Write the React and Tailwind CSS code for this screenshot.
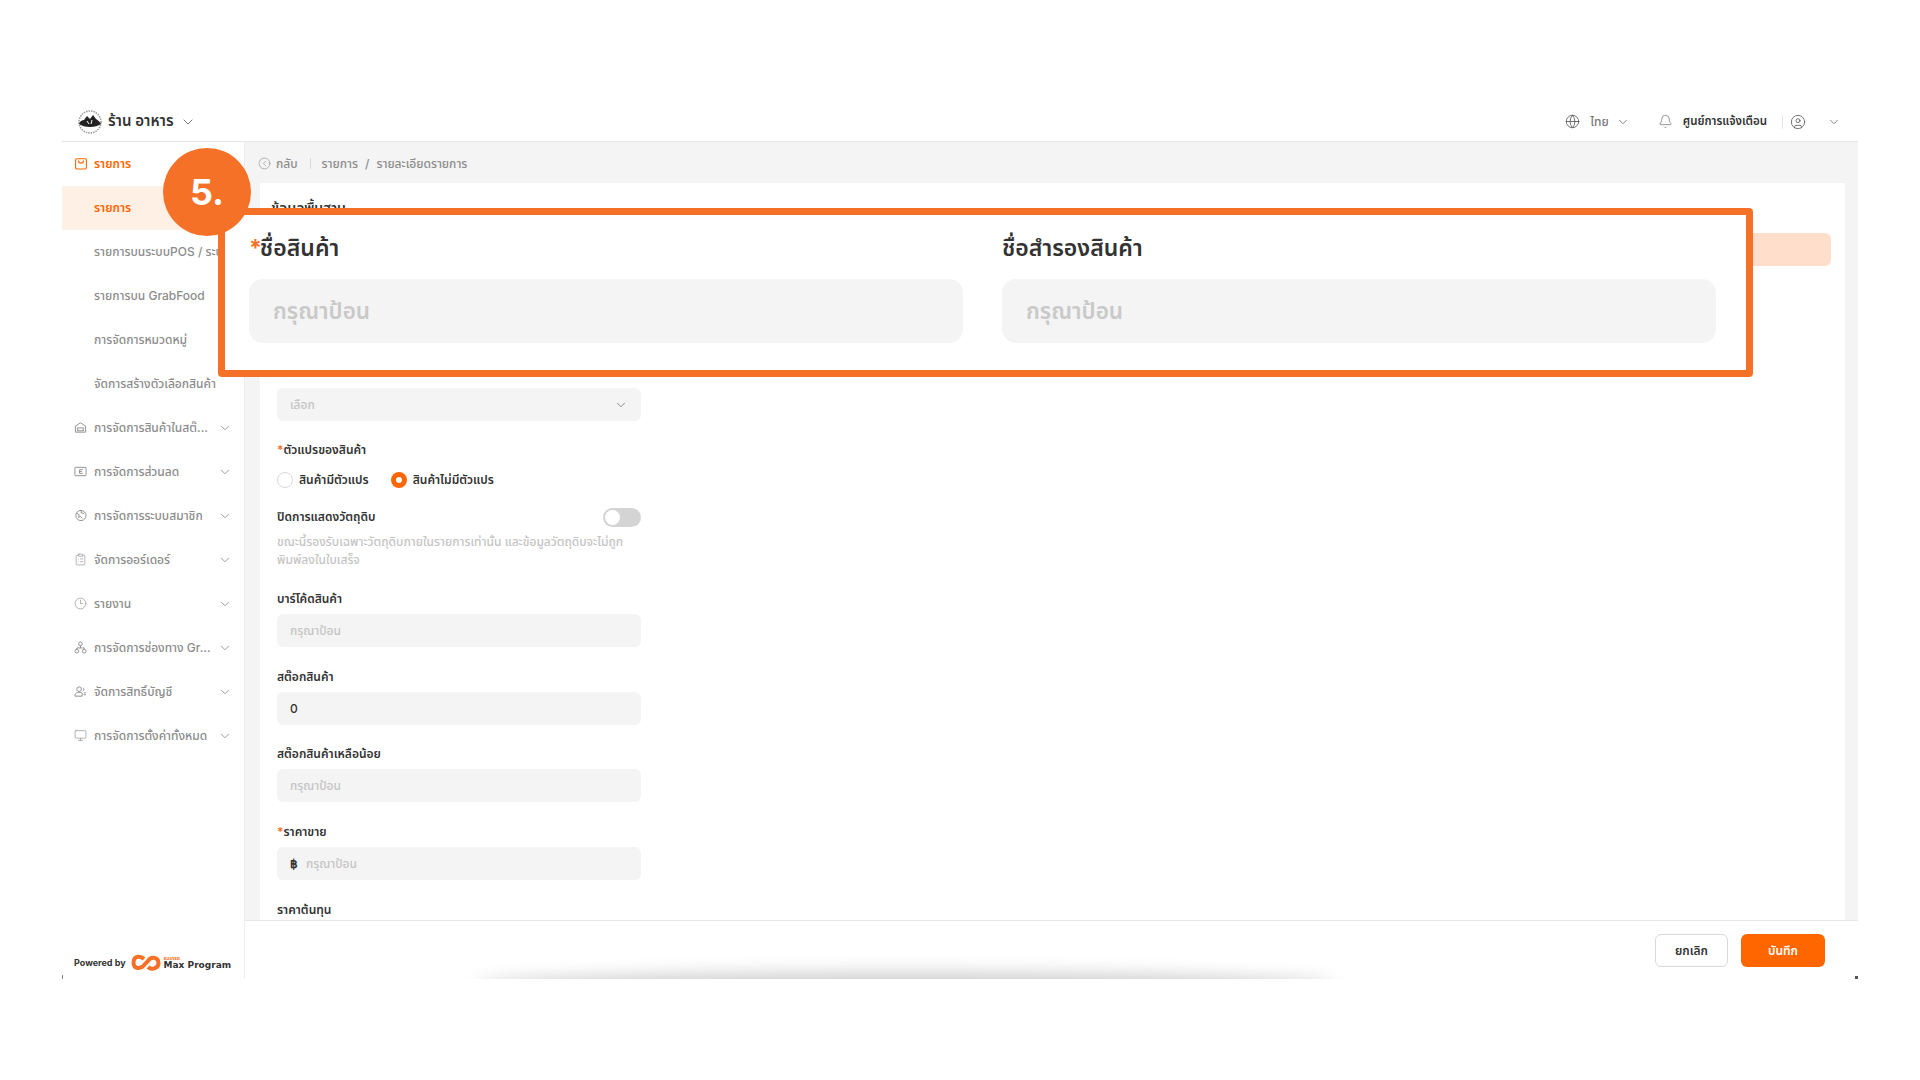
import { Bell, ChevronDown, CircleChevronLeft, CircleUser, ClipboardList, Clock3, Globe, Monitor } from "lucide-react";

const FONT = "font-['Inter','Noto_Sans','Noto_Sans_Thai',sans-serif]";

const subItems = [
  { label: "รายการ", active: true },
  { label: "รายการบนระบบPOS / ระบบ" },
  { label: "รายการบน GrabFood" },
  { label: "การจัดการหมวดหมู่" },
  { label: "จัดการสร้างตัวเลือกสินค้า" },
];

function StoreIcon(props) {
  return (
    <svg {...props} viewBox="0 0 14 14" fill="none" stroke="currentColor" strokeWidth="1">
      <path d="M1.500 5.500 L7 2 L12.500 5.500 V12 H1.500 Z" />
      <rect x="4" y="7.500" width="6" height="3" />
    </svg>
  );
}

function CouponIcon(props) {
  return (
    <svg {...props} viewBox="0 0 14 14" fill="none" stroke="currentColor" strokeWidth="1">
      <rect x="1" y="2.500" width="12" height="9" rx="0.5" />
      <path d="M9.500 5 H6 V9 H9.500 M6 7 H8.500" />
    </svg>
  );
}

function MemberIcon(props) {
  return (
    <svg {...props} viewBox="0 0 14 14" fill="none" stroke="currentColor" strokeWidth="1">
      <circle cx="7.500" cy="7" r="5.500" />
      <path d="M2.500 4.500 L5.500 6 L5 9 L7 8 L9 10 M8 1.500 L7.500 4 L11 5" />
    </svg>
  );
}

function ChannelIcon(props) {
  return (
    <svg {...props} viewBox="0 0 14 14" fill="none" stroke="currentColor" strokeWidth="1">
      <circle cx="7" cy="3" r="2" />
      <circle cx="3" cy="11" r="2" />
      <circle cx="11" cy="11" r="2" />
      <path d="M7 5 V7.500 M3 9 V7.500 H11 V9" />
    </svg>
  );
}

function AccountIcon(props) {
  return (
    <svg {...props} viewBox="0 0 14 14" fill="none" stroke="currentColor" strokeWidth="1">
      <circle cx="5.500" cy="4.500" r="2.500" />
      <path d="M1 12 C1 8.500 3 8 5.500 8 C7 8 8 8.200 8.800 9 V12 Z M9.500 3 C11 3.500 11 6 9.500 6.500 M10.500 8.500 H13 M10.500 10.500 H13" />
    </svg>
  );
}

const menuItems = [
  { label: "การจัดการสินค้าในสต๊...", icon: StoreIcon },
  { label: "การจัดการส่วนลด", icon: CouponIcon },
  { label: "การจัดการระบบสมาชิก", icon: MemberIcon },
  { label: "จัดการออร์เดอร์", icon: ClipboardList },
  { label: "รายงาน", icon: Clock3 },
  { label: "การจัดการช่องทาง Gr...", icon: ChannelIcon },
  { label: "จัดการสิทธิ์บัญชี", icon: AccountIcon },
  { label: "การจัดการตั้งค่าทั้งหมด", icon: Monitor },
];

function ShopLogo() {
  return (
    <svg width="24" height="24" viewBox="0 0 24 24">
      <circle cx="12" cy="12" r="11" fill="none" stroke="#999" strokeWidth="1.500" strokeDasharray="1.500 1" />
      <path d="M1 14 C2 11 4 10 6 10 L9 6 L12 9 L15 5 L18 9 C20 10 22 12 23 14 C18 18 6 18 1 14 Z" fill="#222" />
      <path d="M9 11 L11 14 M14 10 L13 14" stroke="#fff" strokeWidth="1" />
    </svg>
  );
}

function MenuBagIcon() {
  return (
    <svg width="12" height="12" viewBox="0 0 12 12" fill="none" stroke="#ff6600" strokeWidth="1.100">
      <rect x="0.600" y="0.800" width="10.800" height="10.200" rx="1.200" />
      <path d="M3.500 2.500 C3.500 6 8.500 6 8.500 2.500" />
    </svg>
  );
}

function MaxLogo() {
  return (
    <svg width="30" height="18" viewBox="0 0 30 18" fill="none" stroke="#f57127" strokeWidth="4">
      <path d="M13 5 C10 2 3 1 2.500 8.500 C2.500 15 10 16 14 10 L17 7 C20 2 27.500 3 27.500 9 C27.500 15 20 16 17 13" />
    </svg>
  );
}

function Sidebar() {
  return (
    <aside className="w-[183px] shrink-0 border-r border-[#eeeeee] bg-white flex flex-col">
      <div className="h-[44px] flex items-center pl-[13px] gap-[7px] text-[12px] font-semibold text-[#ff6600]">
        <MenuBagIcon />
        <span>รายการ</span>
      </div>
      {subItems.map((item) => (
        <div
          key={item.label}
          className={`h-[44px] flex items-center pl-[32px] text-[12px] whitespace-nowrap overflow-hidden ${
            item.active ? "bg-[#fff0e6] text-[#ff6600] font-semibold" : "text-[#8c8c8c] font-medium"
          }`}
        >
          {item.label}
        </div>
      ))}
      {menuItems.map((item) => (
        <div key={item.label} className="h-[44px] flex items-center pl-[12px] pr-[12px] text-[12px] font-medium text-[#8c8c8c]">
          <item.icon width={13} height={13} strokeWidth={1.2} className="-mt-[2px]" />
          <span className="ml-[7px] flex-1 whitespace-nowrap overflow-hidden">{item.label}</span>
          <ChevronDown size={14} strokeWidth={1.500} />
        </div>
      ))}
      <div className="mt-auto mb-[7px] pl-[12px] flex items-center gap-[5px]">
        <span className="text-[9px] font-bold text-[#333] whitespace-nowrap">Powered by</span>
        <MaxLogo />
        <div className="flex flex-col leading-none -ml-[2px]">
          <span className="text-[5px] font-bold text-[#f57127]">รมเกรด</span>
          <span className="text-[9px] font-bold text-[#333] whitespace-nowrap font-['DejaVu_Sans',sans-serif]">Max Program</span>
        </div>
      </div>
    </aside>
  );
}

function Label({ children, required }) {
  return (
    <div className="h-[16px] flex items-center text-[12px] font-semibold text-[#333] leading-none">
      {required && <span className="text-[#f57127]">*</span>}
      {children}
    </div>
  );
}

function TextBox({ children, dark }) {
  return (
    <div className={`mt-[7px] h-[33px] rounded-[6px] bg-[#f4f4f4] px-[13px] flex items-center text-[12px] font-medium ${dark ? "text-[#333]" : "text-[#c4c4c4]"}`}>
      {children}
    </div>
  );
}

function Form() {
  return (
    <div className="w-[364px] ml-[17px]">
      <div className="h-[16px] flex items-center justify-between pr-[31px] text-[12px] font-semibold text-[#333]">
        <span>หมวดหมู่</span>
        <span className="text-[#f57127]">|</span>
      </div>
      <div className="mt-[10px] h-[33px] rounded-[6px] bg-[#f4f4f4] px-[13px] flex items-center justify-between text-[12px] font-medium text-[#c4c4c4]">
        <span>เลือก</span>
        <ChevronDown size={14} strokeWidth={1.500} className="text-[#777]" />
      </div>

      <div className="mt-[21px]">
        <Label required>ตัวแปรของสินค้า</Label>
      </div>
      <div className="mt-[14px] flex items-center h-[16px] text-[12px] font-semibold text-[#333]">
        <span className="w-[16px] h-[16px] rounded-full border border-[#d9d9d9] bg-white" />
        <span className="ml-[6px]">สินค้ามีตัวแปร</span>
        <span className="ml-[22px] w-[16px] h-[16px] rounded-full border-[5px] border-[#ff6600] bg-white" />
        <span className="ml-[6px]">สินค้าไม่มีตัวแปร</span>
      </div>

      <div className="mt-[19px] flex items-center justify-between h-[20px]">
        <span className="text-[12px] font-semibold text-[#333]">ปิดการแสดงวัตถุดิบ</span>
        <span className="w-[38px] h-[19px] rounded-full bg-[#d4d4d4] p-[2px] flex">
          <span className="w-[15px] h-[15px] rounded-full bg-white" />
        </span>
      </div>
      <p className="mt-[6px] text-[12px] leading-[18px] font-medium text-[#c4c4c4]">
        ขณะนี้รองรับเฉพาะวัตถุดิบภายในรายการเท่านั้น และข้อมูลวัตถุดิบจะไม่ถูกพิมพ์ลงในใบเสร็จ
      </p>

      <div className="mt-[22px]">
        <Label>บาร์โค้ดสินค้า</Label>
        <TextBox>กรุณาป้อน</TextBox>
      </div>
      <div className="mt-[22px]">
        <Label>สต๊อกสินค้า</Label>
        <TextBox dark>0</TextBox>
      </div>
      <div className="mt-[21px]">
        <Label>สต๊อกสินค้าเหลือน้อย</Label>
        <TextBox>กรุณาป้อน</TextBox>
      </div>
      <div className="mt-[22px]">
        <Label required>ราคาขาย</Label>
        <TextBox>
          <span className="text-[#333] mr-[8px] font-bold font-['Liberation_Sans',sans-serif] text-[12px]">฿</span>
          กรุณาป้อน
        </TextBox>
      </div>
      <div className="mt-[22px]">
        <Label>ราคาต้นทุน</Label>
        <TextBox />
      </div>
    </div>
  );
}

function Callout() {
  return (
    <>
      <div className="absolute left-[156px] top-[113px] w-[1535px] h-[169px] rounded-[4px] border-[7px] border-[#f57127] bg-white pl-[24px] pr-[30px] pt-[13px]">
        <div className="grid grid-cols-2 gap-x-[39px]">
          {["ชื่อสินค้า", "ชื่อสำรองสินค้า"].map((label, i) => (
            <div key={label}>
              <div className="h-[40px] flex items-center text-[23px] font-semibold text-[#333] leading-none">
                {i === 0 && <span className="text-[#f57127] font-bold -mr-[2px]">*</span>}
                {label}
              </div>
              <div className="mt-[11px] h-[64px] rounded-[14px] bg-[#f4f4f4] px-[24px] flex items-center text-[22.500px] font-semibold text-[#c9c9c9]">
                กรุณาป้อน
              </div>
            </div>
          ))}
        </div>
      </div>
      <div className="absolute left-[101px] top-[53px] w-[88px] h-[88px] rounded-full bg-[#f57127] flex items-center justify-center text-white text-[36px] font-bold leading-none">
        5.
      </div>
    </>
  );
}

export default function App() {
  return (
    <div className={`h-screen bg-white pt-[95px] pb-[101px] px-[62px] ${FONT}`}>
      <div className="relative h-full flex flex-col overflow-hidden bg-white">
        <header className="h-[47px] shrink-0 border-b border-[#e5e5e5] flex items-center pl-[16px] pr-[17px] pt-[7px]">
          <ShopLogo />
          <span className="ml-[6px] text-[15px] font-semibold text-[#333]">ร้าน อาหาร</span>
          <ChevronDown size={16} strokeWidth={1.500} className="ml-[6px] text-[#777]" />
          <div className="ml-auto flex items-center text-[#555]">
            <Globe size={15} strokeWidth={1.300} />
            <span className="ml-[10px] text-[12px] font-medium text-[#777]">ไทย</span>
            <ChevronDown size={14} strokeWidth={1.500} className="ml-[7px] text-[#777]" />
            <Bell size={15} strokeWidth={1.200} className="ml-[28px] text-[#777]" />
            <span className="ml-[10px] text-[11.500px] font-semibold text-[#333]">ศูนย์การแจ้งเตือน</span>
            <span className="ml-[15px] w-px h-[14px] bg-[#e5e5e5]" />
            <CircleUser size={16} strokeWidth={1.200} className="ml-[7px]" />
            <ChevronDown size={14} strokeWidth={1.500} className="ml-[21px] text-[#777]" />
          </div>
        </header>
        <div className="flex-1 min-h-0 flex">
          <Sidebar />
          <div className="flex-1 min-w-0 flex flex-col">
            <main className="flex-1 min-h-0 overflow-hidden bg-[#f4f4f4] pl-[15px] pr-[13px]">
              <div className="h-[41px] pt-[2px] flex items-center text-[12px] font-medium text-[#8c8c8c]">
                <CircleChevronLeft size={13} strokeWidth={1.200} className="-ml-[2px]" />
                <span className="ml-[5px]">กลับ</span>
                <span className="ml-[12px] w-px h-[11px] bg-[#d9d9d9]" />
                <span className="ml-[11px]">รายการ</span>
                <span className="mx-[7px]">/</span>
                <span>รายละเอียดรายการ</span>
              </div>
              <div className="bg-white pt-[14px] pb-[40px] min-h-full">
                <div className="ml-[11px] h-[22px] text-[14px] font-semibold text-[#333]">ข้อมูลพื้นฐาน</div>
                <div className="ml-[11px] mr-[14px] mt-[14px] h-[33px] rounded-[6px] bg-[#ffdecb]" />
                <div className="h-[96px]" />
                <Form />
              </div>
            </main>
            <footer className="h-[59px] shrink-0 border-t border-[#e8e8e8] bg-white flex items-center justify-end gap-[13px] pr-[33px]">
              <button className="w-[73px] h-[33px] pt-[2px] rounded-[6px] border border-[#d9d9d9] bg-white text-[12px] font-semibold text-[#333]">ยกเลิก</button>
              <button className="w-[84px] h-[33px] pt-[2px] rounded-[6px] bg-[#ff6600] text-[12px] font-semibold text-white">บันทึก</button>
            </footer>
          </div>
        </div>
        <div className="absolute left-[418px] bottom-[-14px] w-[850px] h-[14px] rounded-[50%] shadow-[0_0_18px_6px_rgba(0,0,0,0.2)]" />
        <span className="absolute right-0 bottom-0 w-[3px] h-[3px] bg-[#555]" />
        <span className="absolute left-0 bottom-0 w-px h-[4px] bg-[#888]" />
        <Callout />
      </div>
    </div>
  );
}
